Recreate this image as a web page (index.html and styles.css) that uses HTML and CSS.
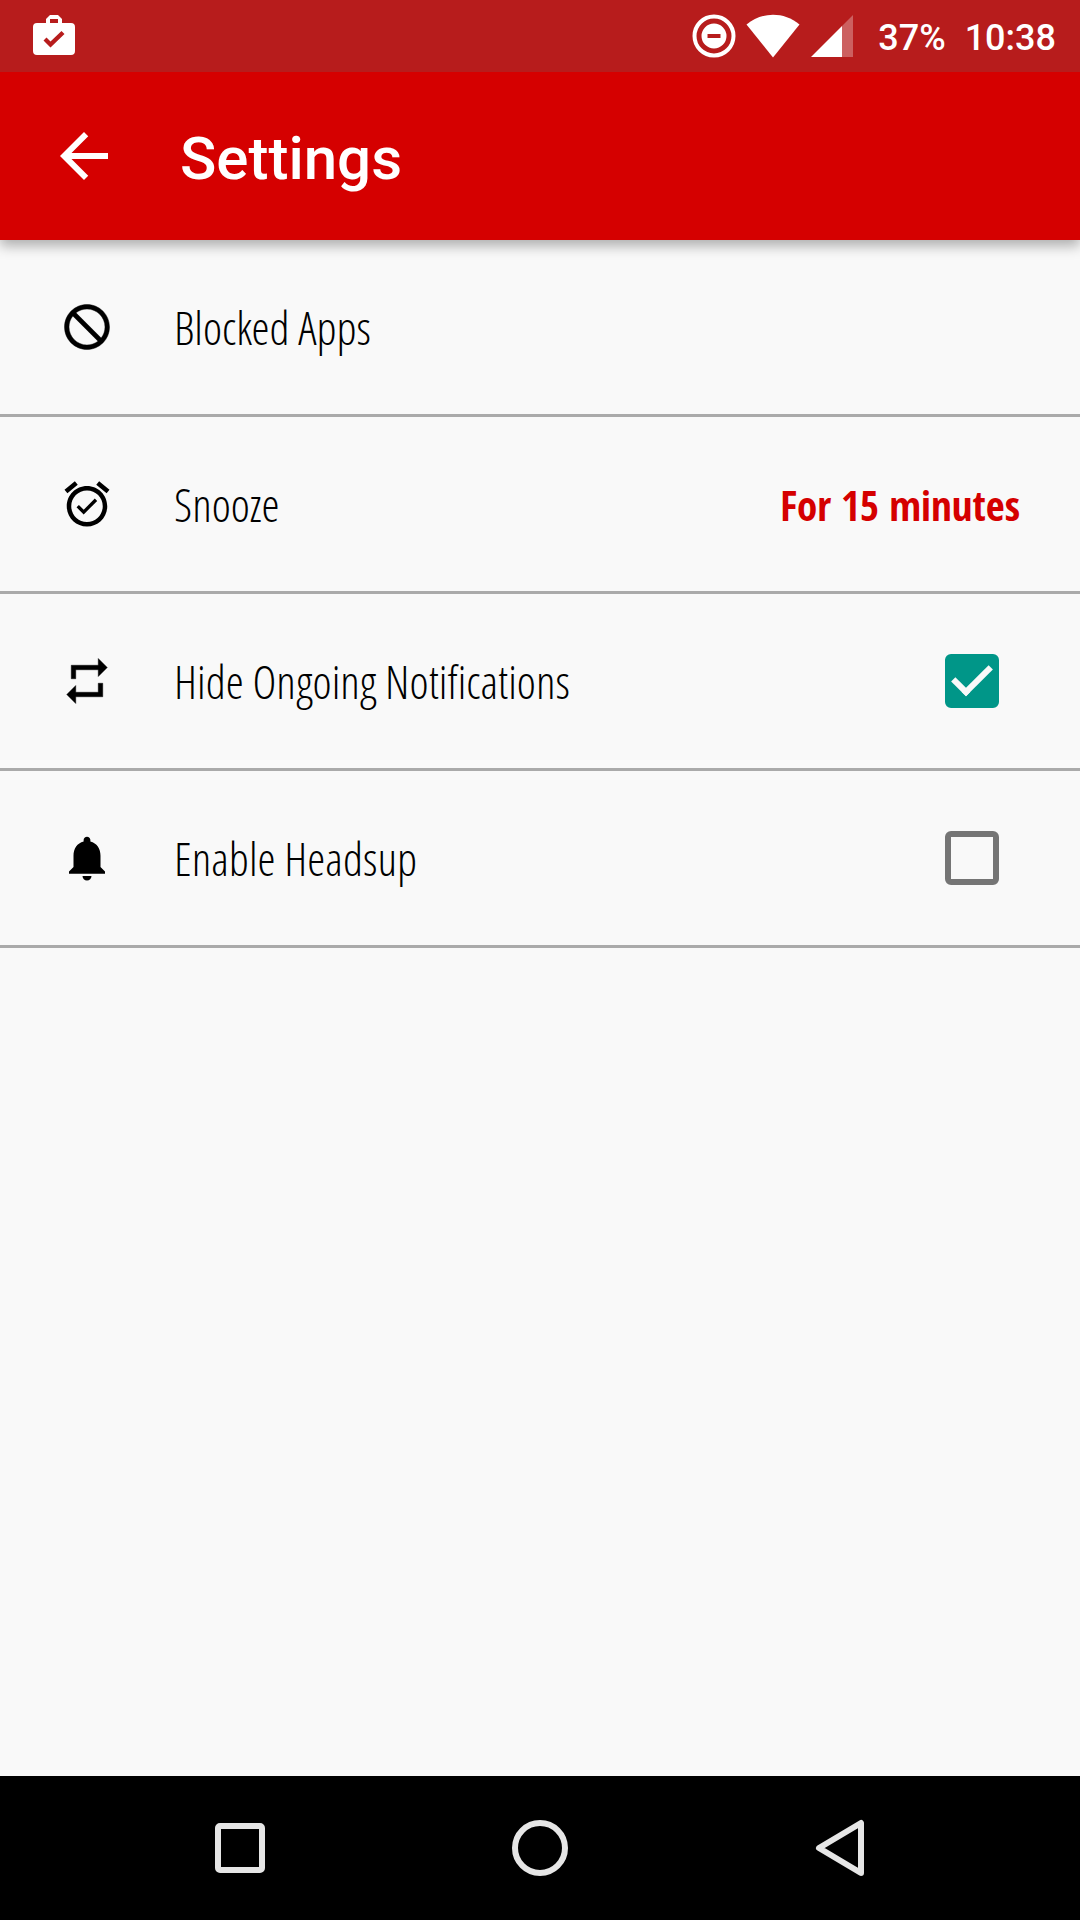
FILE: index.html
```html
<!DOCTYPE html>
<html lang="en">
<head>
<meta charset="utf-8">
<meta name="viewport" content="width=device-width, initial-scale=1">
<title>Settings</title>
<link rel="stylesheet" href="styles.css">
</head>
<body>
<div class="screen">
  <div class="status-bar">
    <svg class="status-icon" viewBox="0 0 44 44" aria-hidden="true">
      <path fill="#fff" fill-rule="evenodd" d="M18 1h8l4 4v4h9q4 0 4 4v24q0 4-4 4H5q-4 0-4-4V13q0-4 4-4h9V5zM18 5v4h8V5zM11.500 26.500 18.500 33.500 32.500 20 29.500 17 18.500 27.500 14.500 23.500z"/>
    </svg>
    <div class="status-right">
      <svg class="status-icon" viewBox="0 0 44 44" aria-hidden="true">
        <circle cx="22" cy="22" r="19.500" fill="none" stroke="#fff" stroke-width="4"/>
        <path fill="#fff" fill-rule="evenodd" d="M22 9.500a12.500 12.500 0 1 0 0 25a12.500 12.500 0 1 0 0-25zM15.500 20h13v4h-13z"/>
      </svg>
      <svg class="status-icon wifi" viewBox="0 0 54 44" aria-hidden="true">
        <path fill="#fff" d="M0.500 10.500C16-2.500 38-2.500 53.500 10.500L27 43.500z"/>
      </svg>
      <svg class="status-icon" viewBox="0 0 44 44" aria-hidden="true">
        <path fill="#fff" fill-opacity=".3" d="M43 1v42H32V12z"/>
        <path fill="#fff" d="M32 12v31H1z"/>
      </svg>
      <span class="battery">37%</span>
      <span class="clock">10:38</span>
    </div>
  </div>
  <header class="toolbar">
    <button class="back" type="button" aria-label="Back">
      <svg viewBox="0 0 24 24" aria-hidden="true"><path fill="#fff" d="M20 11H7.830l5.590-5.590L12 4l-8 8 8 8 1.410-1.410L7.830 13H20v-2z"/></svg>
    </button>
    <h1 class="title">Settings</h1>
  </header>
  <main class="settings">
    <button class="row" type="button">
      <svg class="row-icon outlined" viewBox="0 0 24 24" aria-hidden="true"><path d="M12 2C6.480 2 2 6.480 2 12s4.480 10 10 10 10-4.480 10-10S17.520 2 12 2zM4 12c0-4.420 3.580-8 8-8 1.850 0 3.550.63 4.900 1.690L5.690 16.900C4.630 15.550 4 13.850 4 12zm8 8c-1.850 0-3.550-.63-4.900-1.690L18.310 7.100C19.370 8.450 20 10.150 20 12c0 4.420-3.580 8-8 8z" transform="matrix(-1 0 0 1 24 0)"/></svg>
      <span class="label">Blocked Apps</span>
    </button>
    <button class="row" type="button">
      <svg class="row-icon" viewBox="0 0 24 24" aria-hidden="true"><path d="M22 5.720l-4.600-3.860-1.290 1.530 4.600 3.860L22 5.720zM7.880 3.390L6.600 1.860 2 5.710l1.290 1.530 4.590-3.850zM12 4c-4.970 0-9 4.030-9 9s4.020 9 9 9c4.970 0 9-4.030 9-9s-4.030-9-9-9zm0 16c-3.870 0-7-3.130-7-7s3.130-7 7-7 7 3.130 7 7-3.130 7-7 7zm-1.460-5.470L8.410 12.400l-1.060 1.060 3.180 3.180 6-6-1.060-1.060-4.930 4.950z"/></svg>
      <span class="label">Snooze</span>
      <span class="value">For 15 minutes</span>
    </button>
    <label class="row">
      <svg class="row-icon outlined" viewBox="0 0 24 24" aria-hidden="true"><path d="M7 7h10v3l4-4-4-4v3H5v6h2V7zm10 10H7v-3l-4 4 4 4v-3h12v-6h-2v4z"/></svg>
      <span class="label">Hide Ongoing Notifications</span>
      <input class="check" type="checkbox" checked>
    </label>
    <label class="row">
      <svg class="row-icon" viewBox="0 0 24 24" aria-hidden="true"><path d="M12 22c1.100 0 2-.9 2-2h-4c0 1.100.89 2 2 2zm6-6v-5c0-3.070-1.640-5.640-4.500-6.320V4c0-.83-.67-1.500-1.500-1.500s-1.500.67-1.500 1.500v.68C7.630 5.360 6 7.920 6 11v5l-2 2v1h16v-1l-2-2z"/></svg>
      <span class="label">Enable Headsup</span>
      <input class="check" type="checkbox">
    </label>
  </main>
  <nav class="nav-bar" aria-label="System">
    <button class="nav-button" type="button" aria-label="Recent apps">
      <svg viewBox="0 0 60 60" aria-hidden="true"><rect x="8" y="8" width="44" height="44" rx="2"/></svg>
    </button>
    <button class="nav-button" type="button" aria-label="Home">
      <svg viewBox="0 0 60 60" aria-hidden="true"><circle cx="30" cy="30" r="25"/></svg>
    </button>
    <button class="nav-button" type="button" aria-label="Back">
      <svg viewBox="0 0 60 60" aria-hidden="true"><path d="M51 5v50L9 30z"/></svg>
    </button>
  </nav>
</div>
</body>
</html>
```

FILE: styles.css
```css
*,
*::before {
  box-sizing: border-box;
}

body {
  margin: 0;
  background: #f9f9f9;
  color: #000;
  font-family: Roboto, sans-serif;
}

button {
  margin: 0;
  padding: 0;
  border: 0;
  background: none;
  color: inherit;
  font: inherit;
}

svg {
  display: block;
  flex: none;
}

.screen {
  display: flex;
  flex-direction: column;
  min-height: 100vh;
}

.status-bar {
  position: relative;
  z-index: 1;
  display: flex;
  align-items: center;
  justify-content: space-between;
  height: 72px;
  padding: 0 24px 0 32px;
  background: #b71c1c;
  color: #fff;
  font-size: 36px;
  font-weight: 500;
  line-height: 44px;
}

.status-right {
  display: flex;
  align-items: center;
}

.status-icon {
  width: 44px;
  height: 44px;
}

.wifi {
  width: 54px;
  margin: 0 10px;
}

.battery,
.clock {
  padding-top: 3px;
}

.battery {
  margin-left: 24px;
}

.clock {
  margin-left: 19px;
}

.toolbar {
  display: flex;
  align-items: center;
  gap: 60px;
  height: 168px;
  padding: 0 48px;
  background: #d50000;
  color: #fff;
  box-shadow: 0 6px 12px rgba(0, 0, 0, 0.3);
}

.back svg {
  width: 72px;
  height: 72px;
}

.title {
  margin: 0;
  padding-top: 5px;
  font-size: 60px;
  font-weight: 500;
  line-height: 72px;
}

.settings {
  flex: 1;
}

.row {
  display: flex;
  align-items: center;
  width: 100%;
  height: 177px;
  padding: 0 60px;
  border-bottom: 3px solid #aaa;
  line-height: 60px;
  text-align: left;
}

.row-icon {
  width: 54px;
  height: 54px;
  margin-right: 60px;
}

.outlined {
  stroke: #000;
  stroke-width: 0.2;
}

.label {
  flex: 1;
  font-family: "Open Sans Condensed Light", "Open Sans Condensed", "Roboto Condensed", sans-serif;
  font-size: 46px;
  font-weight: 300;
}

.value {
  padding-top: 1px;
  color: #d50000;
  font-family: "Open Sans Condensed", "Roboto Condensed", sans-serif;
  font-size: 41px;
  font-weight: 700;
}

.check {
  appearance: none;
  width: 54px;
  height: 54px;
  margin: 0 21px;
  border: 6px solid #757575;
  border-radius: 6px;
}

.check:checked {
  display: grid;
  place-items: center;
  border-color: #009688;
  background: #009688;
}

.check:checked::before {
  content: "";
  width: 38px;
  height: 21px;
  margin-bottom: 12px;
  border: solid #f9f9f9;
  border-width: 0 0 6px 6px;
  transform: rotate(-45deg);
}

.nav-bar {
  display: flex;
  justify-content: center;
  height: 144px;
  background: #000;
}

.nav-button {
  display: grid;
  flex: 0 1 300px;
  place-items: center;
}

.nav-button svg {
  width: 60px;
  height: 60px;
  fill: none;
  stroke: #e6e6e6;
  stroke-width: 6;
  stroke-linejoin: round;
}
```
